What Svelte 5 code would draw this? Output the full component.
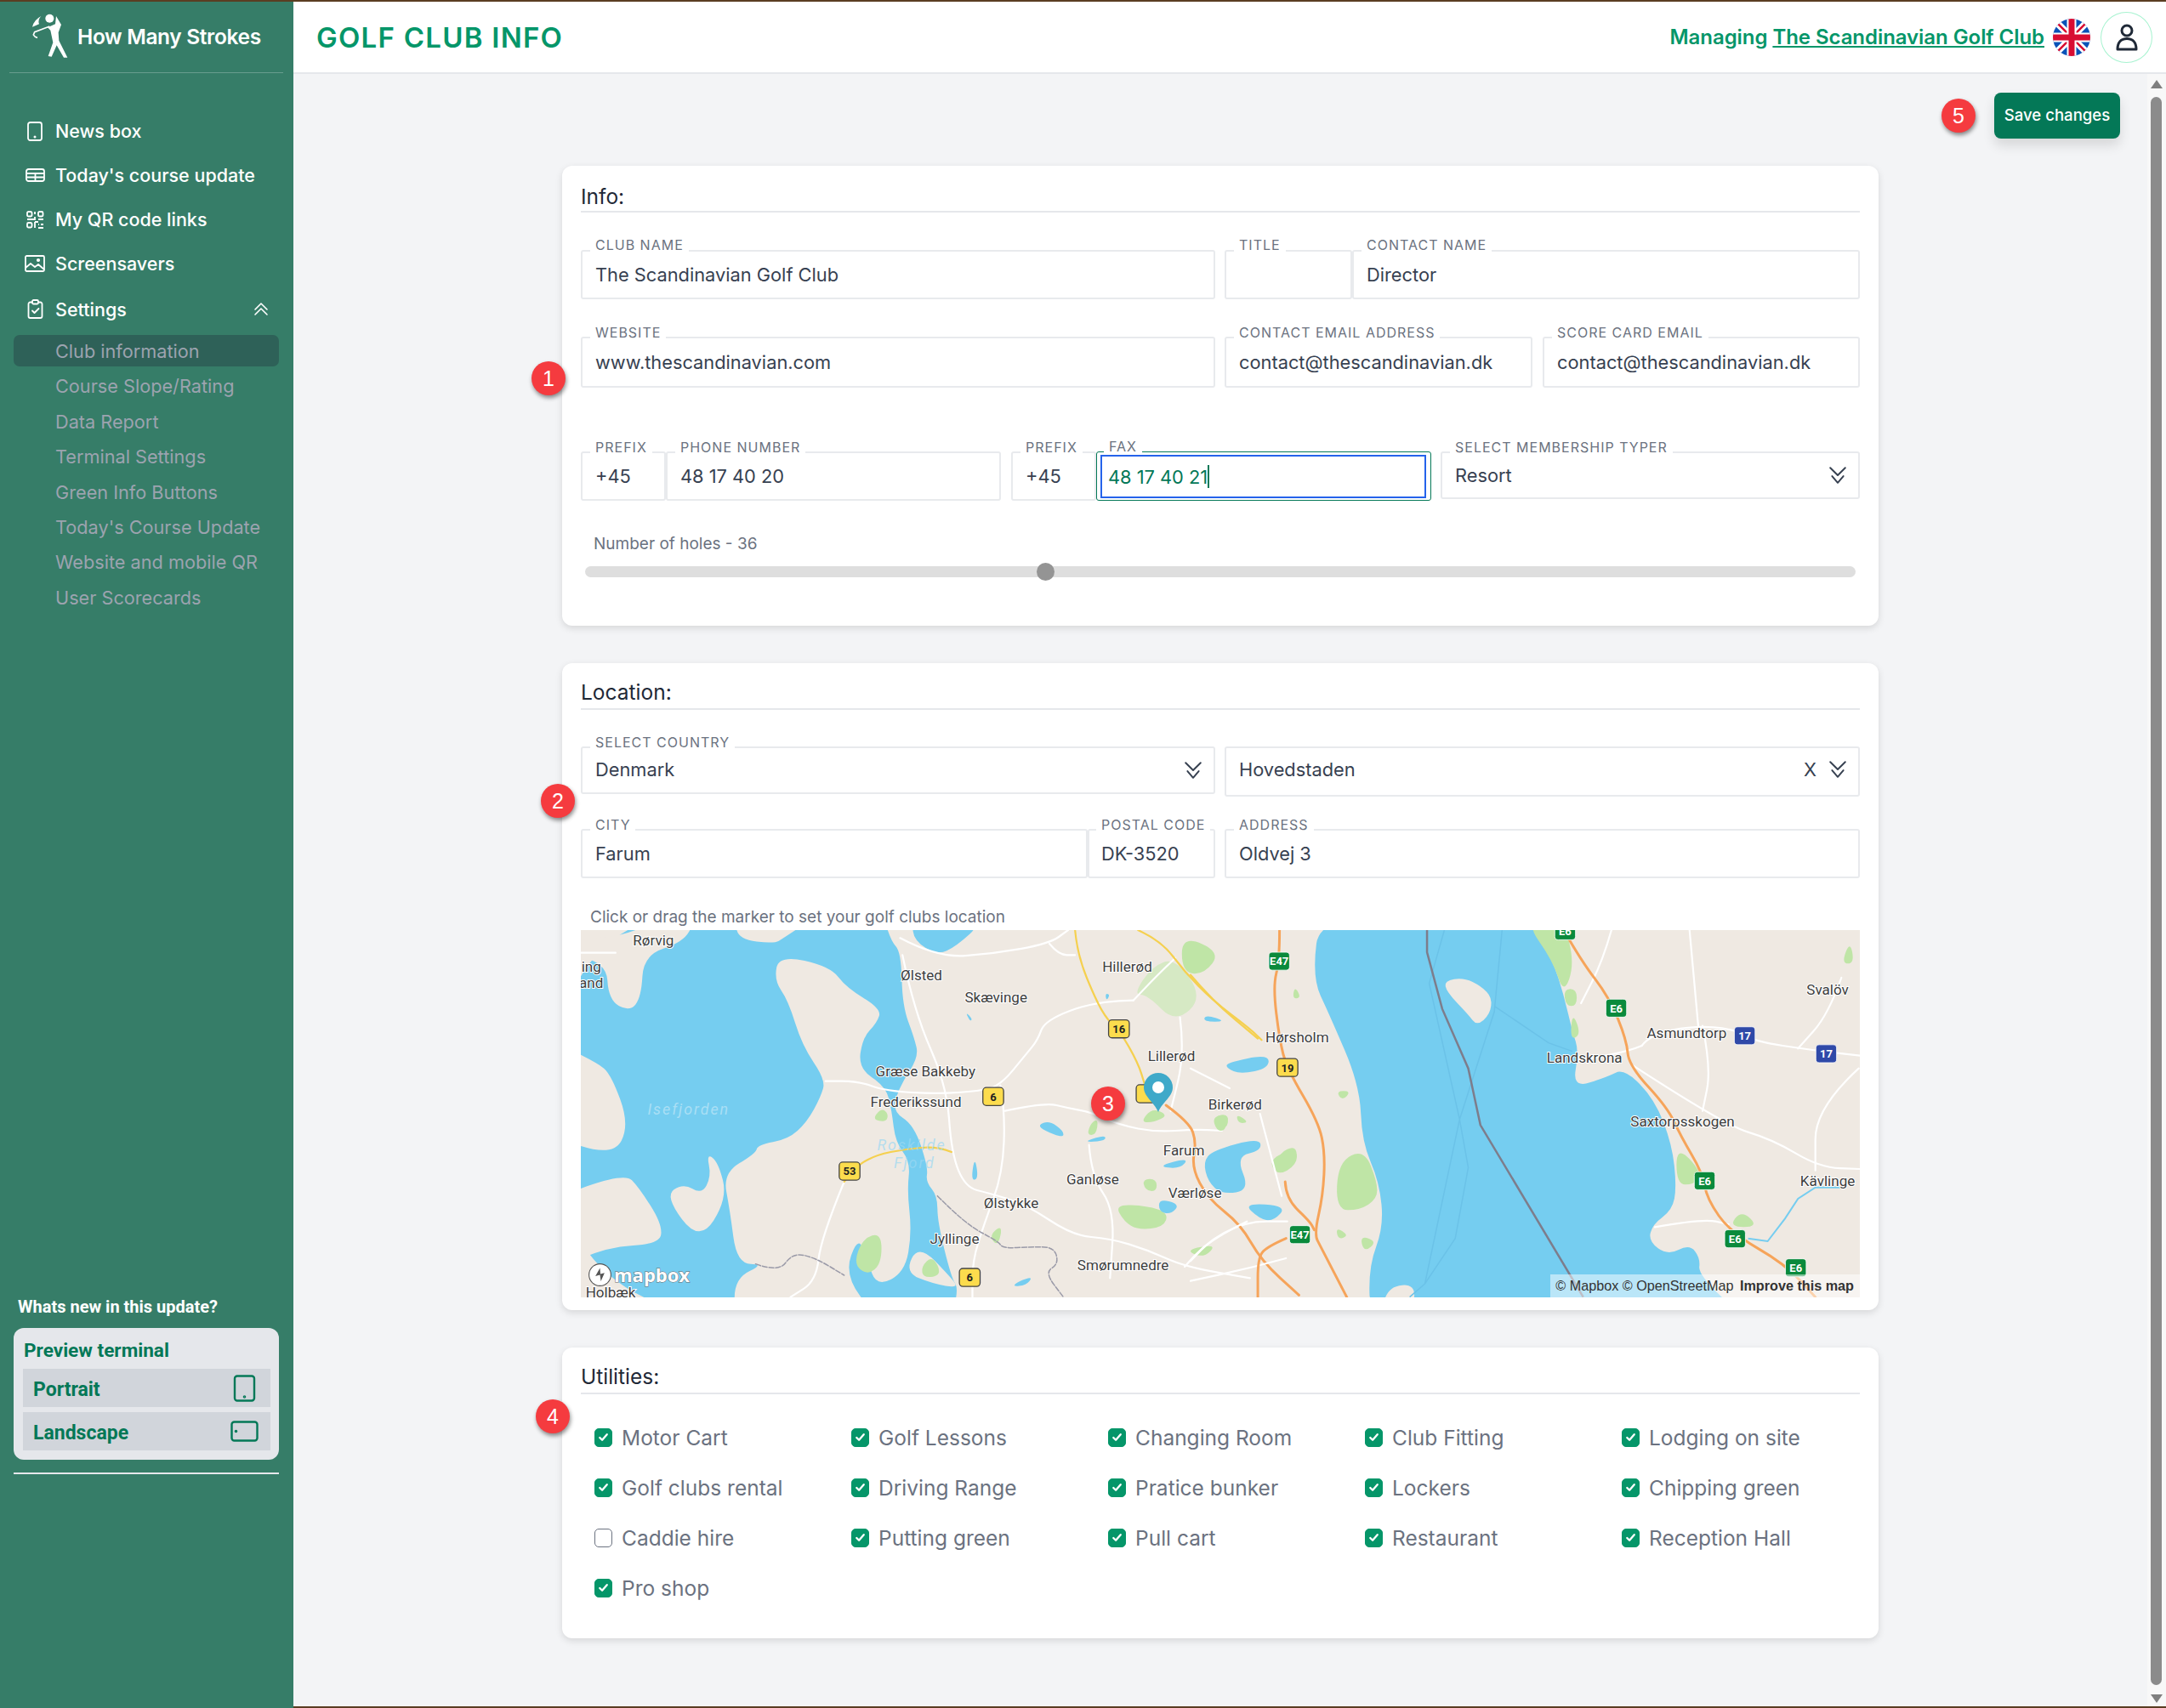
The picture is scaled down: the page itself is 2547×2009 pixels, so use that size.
<script>
	const mainNav = ['News box', "Today's course update", 'My QR code links', 'Screensavers'];
	const subNav = [
		'Club information',
		'Course Slope/Rating',
		'Data Report',
		'Terminal Settings',
		'Green Info Buttons',
		"Today's Course Update",
		'Website and mobile QR',
		'User Scorecards'
	];

	const holes = 36;
	const holesPercent = 36.2;

	let utilities = $state([
		{ name: 'Motor Cart', on: true },
		{ name: 'Golf Lessons', on: true },
		{ name: 'Changing Room', on: true },
		{ name: 'Club Fitting', on: true },
		{ name: 'Lodging on site', on: true },
		{ name: 'Golf clubs rental', on: true },
		{ name: 'Driving Range', on: true },
		{ name: 'Pratice bunker', on: true },
		{ name: 'Lockers', on: true },
		{ name: 'Chipping green', on: true },
		{ name: 'Caddie hire', on: false },
		{ name: 'Putting green', on: true },
		{ name: 'Pull cart', on: true },
		{ name: 'Restaurant', on: true },
		{ name: 'Reception Hall', on: true },
		{ name: 'Pro shop', on: true }
	]);

	// numbered callouts, centre point on the page
	const callouts = [
		{ n: 1, x: 645, y: 445 },
		{ n: 2, x: 656, y: 942 },
		{ n: 3, x: 1303, y: 1298 },
		{ n: 4, x: 650, y: 1666 },
		{ n: 5, x: 2303, y: 136 }
	];

	// map labels in reference units, scaled by the group around them
	const places = [
		['Rørvig', 473, 681],
		['ing', 428, 700],
		['and', 428, 712],
		['Ølsted', 667, 706],
		['Skævinge', 721, 722],
		['Hillerød', 816, 700],
		['Hørsholm', 939, 751],
		['Græse Bakkeby', 670, 776],
		['Lillerød', 848, 765],
		['Frederikssund', 663, 798],
		['Birkerød', 894, 800],
		['Farum', 857, 833],
		['Ganløse', 791, 854],
		['Værløse', 865, 864],
		['Ølstykke', 732, 871],
		['Jyllinge', 691, 897],
		['Smørumnedre', 813, 916],
		['Holbæk', 442, 936],
		['Svalöv', 1323, 717],
		['Asmundtorp', 1221, 748],
		['Landskrona', 1147, 766],
		['Saxtorpsskogen', 1218, 812],
		['Kävlinge', 1323, 855]
	];

	const shields = [
		['E47', 926, 696, 'g'],
		['16', 810, 745, 'y'],
		['19', 932, 773, 'y'],
		['6', 719, 794, 'y'],
		['', 830, 792, 'y'],
		['53', 615, 848, 'y'],
		['E47', 941, 894, 'g'],
		['6', 702, 925, 'y'],
		['E6', 1133, 674, 'g'],
		['E6', 1170, 730, 'g'],
		['17', 1263, 750, 'b'],
		['17', 1322, 763, 'b'],
		['E6', 1234, 855, 'g'],
		['E6', 1256, 897, 'g'],
		['E6', 1300, 918, 'g']
	];

	// rounds off the hand traced outlines: corners become curves through the edge midpoints
	function smooth(d) {
		const n = d.match(/-?\d+(\.\d+)?/g).map(Number);
		const pts = [];
		for (let i = 0; i < n.length; i += 2) pts.push([n[i], n[i + 1]]);
		const mid = (a, b) => `${(a[0] + b[0]) / 2} ${(a[1] + b[1]) / 2}`;
		if (d.trim().endsWith('Z')) {
			let out = `M${mid(pts[0], pts[1])}`;
			for (let i = 1; i <= pts.length; i++) {
				const p = pts[i % pts.length];
				const q = pts[(i + 1) % pts.length];
				out += `Q${p[0]} ${p[1]} ${mid(p, q)}`;
			}
			return out + 'Z';
		}
		let out = `M${pts[0][0]} ${pts[0][1]}`;
		for (let i = 1; i < pts.length - 1; i++) {
			out += `Q${pts[i][0]} ${pts[i][1]} ${mid(pts[i], pts[i + 1])}`;
		}
		const last = pts[pts.length - 1];
		return out + `L${last[0]} ${last[1]}`;
	}

	// west half of the map, in 0.5485 x 0.3333 units
	const westWater = 'M-60 -60L650 -60L670 50L692 90L695 280L720 390L730 460L690 560L672 650L720 700L750 850L745 900L770 950L770 1040L800 1240L815 1275L800 1380L-60 1380Z';
	const westLand = [
		'M-60 60L40 40L100 28L170 -20L250 -20L225 55L140 100L135 250L110 300L65 260L60 120L-60 95Z',
		'M335 -20L495 -20L440 40L420 60L345 45Z',
		'M430 100L540 140L575 215L650 290L640 340L610 390L600 500L660 565L672 650L680 760L712 830L705 930L715 1080L700 1220L640 1270L620 1180L600 1090L570 1230L640 1380L335 1380L335 1240L400 1190L340 1190L325 1000L310 870L380 800L385 770L450 750L490 690L520 600L530 540L480 420L450 260L420 190Z',
		'M-60 400L40 480L70 520L110 700L75 810L-60 740Z',
		'M-60 960L100 870L130 920L180 1050L175 1120L60 1130L-60 1220Z',
		'M275 800L300 830L320 960L260 1115L185 950L225 905L265 945L285 880Z',
		'M700 1220L730 1120L800 1240L815 1275L760 1260Z'
	];
	const westLakes = [
		'M715 -20L870 -20L810 70L770 100L720 50Z',
		'M1390 480L1480 450L1480 500L1420 520L1390 500Z',
		'M985 700L1010 685L1040 720L1040 745L1000 720Z',
		'M1340 830L1360 790L1460 745L1465 790L1410 810L1440 930L1380 945L1350 900Z',
		'M1240 845L1310 815L1290 855Z',
		'M1245 960L1290 980L1270 1015L1245 1005Z',
		'M1090 755L1130 735L1130 755L1095 760Z',
		'M830 300L845 325L840 335Z',
		'M1425 975L1520 985L1490 1040L1460 1030Z',
		'M850 810L858 890L842 895Z',
		'M945 1250L975 1235L960 1265L930 1270Z',
		'M1345 310L1390 335L1340 335Z',
		'M1130 235L1140 240L1132 262Z'
	];
	const westForest = 'M1230 140L1280 110L1340 250L1280 340L1220 240L1190 240Z';
	const westGreen = [
		'M1150 980L1220 985L1265 1010L1255 1060L1200 1070L1170 1040Z',
		'M1205 690L1230 640L1265 665L1235 690Z',
		'M1090 735L1100 690L1115 680L1110 735Z',
		'M1360 670L1395 660L1390 720Z',
		'M1210 890L1240 890L1240 935L1215 930Z',
		'M630 680L650 640L665 660L660 690Z',
		'M590 1190L610 1100L650 1080L650 1190L620 1230Z',
		'M735 1200L760 1160L780 1230L740 1240Z',
		'M880 1090L910 1050L900 1130Z',
		'M1500 800L1540 770L1540 840L1510 850Z',
		'M1300 1140L1370 1120L1340 1170Z'
	];
	const westWhite = [
		'M690 40L770 110L890 95L1010 60L1050 12',
		'M1010 60L1030 100L1065 100',
		'M1190 260L1110 262L1000 330L985 400L960 450L905 560L860 580L770 590L660 580L600 545L530 545',
		'M905 560L915 650L910 870L870 1050L845 1180L845 1307',
		'M915 650L1000 620L1050 640L1100 655L1160 700L1240 725L1320 715L1380 720',
		'M695 100L720 300L790 560L800 800L830 920L880 940L960 980L1060 1090L1140 1100L1220 1140L1300 1200L1440 1240',
		'M570 900L520 1100L510 1250L455 1307',
		'M1190 260L1230 190L1280 110',
		'M1095 770L1100 880L1150 1000L1140 1240',
		'M1290 320L1300 450L1270 650',
		'M5 92L80 92',
		'M1300 1200L1340 1120L1430 1040L1520 1040'
	];
	const westYellow = [
		'M1065 12L1070 100L1110 260L1135 330L1160 365L1200 480L1215 560',
		'M1200 12L1250 50L1300 160L1360 260L1440 360L1465 400',
		'M800 795L770 775L700 785L640 805L600 840L570 900'
	];
	const westOrange = 'M1260 630L1310 690L1325 760L1315 850L1350 960L1420 1050L1465 1180L1545 1300';
	const westBorder = [
		'M770 950L830 1050L900 1110L910 1135L970 1130L1020 1130L1030 1190L1000 1220L1040 1307',
		'M380 1190L430 1220L460 1150L510 1170L570 1230'
	];

	// east half of the map, in 0.5102 x 0.3333 units
	const sound = 'M300 -60L770 -60L835 120L860 240L880 370L895 440L880 570L960 530L1000 500L1070 610L1110 770L1120 920L1110 1000L1065 1050L1055 1110L1100 1160L1150 1120L1175 1170L1170 1230L1290 1400L415 1400L410 1200L445 1060L435 900L395 760L390 560L320 310L280 180Z';
	const eastLand = [
		'M585 190L630 180L670 210L695 250L690 310L660 350L640 310L590 230Z',
		'M450 1270L525 1260L500 1400L440 1400Z'
	];
	const eastGreen = [
		'M335 1000L340 830L400 785L430 900L430 960L390 1000Z',
		'M770 -20L860 -20L885 130L860 240L835 120Z',
		'M860 220L890 220L890 280L865 280Z',
		'M1120 770L1180 870L1160 910L1120 910Z',
		'M180 820L245 780L245 840L200 880Z',
		'M-20 30L70 90L30 170L-20 160Z',
		'M335 580L370 580L350 615Z',
		'M50 670L90 660L80 720L60 720Z',
		'M1520 50L1530 130L1500 130Z',
		'M1270 1000L1310 1060L1240 1060Z',
		'M390 1090L430 1110L400 1150Z',
		'M105 660L135 690L110 695Z',
		'M335 1060L365 1090L340 1105Z',
		'M880 300L900 380L875 400Z',
		'M240 210L255 250L235 255Z'
	];
	const eastWhite = [
		'M1040 420L1010 440L900 470',
		'M1040 420L1060 380L1160 350L1250 360L1300 405L1430 435L1543 455',
		'M970 12L950 120L900 270',
		'M1170 350L1150 12',
		'M1180 350L1200 500L1180 650',
		'M1020 490L1230 700L1340 750L1450 850L1543 855',
		'M0 500L90 570',
		'M160 660L210 950',
		'M1070 1060L1180 1030L1240 1050',
		'M130 1040L50 1100L0 1180',
		'M220 1170L150 1200L0 1250',
		'M1540 500L1440 640L1440 860',
		'M1500 180L1470 310L1400 430'
	];
	const eastOrange = [
		'M205 12L205 120L190 210L205 400L222 500L295 690L310 800L305 950L285 1085L300 1130L360 1307',
		'M218 900L220 960L275 1040L285 1070',
		'M220 1100L175 1130L155 1170L155 1307',
		'M860 12L900 120L965 250L1005 400L1010 490L1100 640L1130 740L1180 870L1190 960L1245 1080L1370 1190L1440 1307'
	];
</script>

{#snippet chevrons()}
	<svg class="chevrons" viewBox="0 0 20 20" fill="none" stroke="currentColor" stroke-width="1.8" stroke-linecap="round" stroke-linejoin="round">
		<path d="M2 2l8 8 8-8" />
		<path d="M4 11l6 7 6-7" />
	</svg>
{/snippet}

<div class="page">
	<aside class="sidebar">
		<div class="brand">
			<svg class="golfer" viewBox="0 0 270 225" fill="#fff">
				<circle cx="115" cy="50" r="15" />
				<path d="M108 82L135 70L138 42L156 72L146 100L148 128L178 188L165 188L140 145L122 185L110 183L127 135L118 92Z" />
				<path d="M115 78L62 98L58 108Q62 116 72 118" fill="none" stroke="#fff" stroke-width="5" />
				<path d="M85 42Q60 55 54 80L78 70Q72 55 85 42Z" />
			</svg>
			<span>How Many Strokes</span>
		</div>

		<nav class="nav">
			{#each mainNav as item, i}
				<a class="nav-item" href="#top">
					<span class="nav-icon">
						{#if i === 0}
							<svg width="18" height="23" viewBox="0 0 18 23" fill="none" stroke="#fff" stroke-width="1.8">
								<rect x="1" y="1" width="16" height="21" rx="2.5" />
								<circle cx="9" cy="18" r=".6" fill="#fff" />
							</svg>
						{:else if i === 1}
							<svg width="23" height="16" viewBox="0 0 23 16" fill="none" stroke="#fff" stroke-width="1.8">
								<rect x="1" y="1" width="21" height="14" rx="2.5" />
								<path d="M1 6h21M1 10.5h21M11.5 6v9" />
							</svg>
						{:else if i === 2}
							<svg width="21" height="21" viewBox="0 0 21 21" fill="none" stroke="#fff" stroke-width="1.8">
								<rect x="1" y="1" width="5.5" height="5.5" rx="1.5" />
								<rect x="14" y="1" width="5.5" height="5.5" rx="1.5" />
								<rect x="1" y="14" width="5.5" height="5.5" rx="1.5" />
								<path d="M10 1v3M10 7v3H1M14 10h6M10 13h4M10 13v7M14 16h1M17 16h3M14 20h6" />
							</svg>
						{:else}
							<svg width="24" height="20" viewBox="0 0 24 20" fill="none" stroke="#fff" stroke-width="1.8" stroke-linejoin="round">
								<rect x="1" y="1" width="22" height="18" rx="1.5" />
								<path d="M1 15l6-5 5 4 4-3 7 6" />
								<circle cx="16" cy="6" r="1.2" fill="#fff" />
							</svg>
						{/if}
					</span>
					{item}
				</a>
			{/each}

			<a class="nav-item settings" href="#top">
				<span class="nav-icon">
					<svg width="19" height="23" viewBox="0 0 19 23" fill="none" stroke="#fff" stroke-width="1.8" stroke-linecap="round" stroke-linejoin="round">
						<path d="M6 3.5H3.5a2 2 0 0 0-2 2V20a2 2 0 0 0 2 2h12a2 2 0 0 0 2-2V5.5a2 2 0 0 0-2-2H13" />
						<rect x="6" y="1" width="7" height="4.5" rx="1.5" />
						<path d="M6 13.5l2.5 2.5 5-5" />
					</svg>
				</span>
				Settings
				<svg class="caret" viewBox="0 0 18 18" fill="none" stroke="#fff" stroke-width="1.6" stroke-linecap="round" stroke-linejoin="round">
					<path d="M2 10l7-7 7 7" />
					<path d="M2 16l7-7 7 7" />
				</svg>
			</a>

			<div class="subnav">
				{#each subNav as item, i}
					<a class="sub-item" class:active={i === 0} href="#top">{item}</a>
				{/each}
			</div>
		</nav>

		<div class="whatsnew">
			<p class="whatsnew-title">Whats new in this update?</p>
			<div class="preview">
				<p class="preview-title">Preview terminal</p>
				<button class="preview-btn">
					<span>Portrait</span>
					<svg class="portrait" width="27" height="32" viewBox="0 0 27 32" fill="none" stroke="#047857" stroke-width="2.4">
						<rect x="2" y="1.5" width="23" height="29" rx="3" />
						<circle cx="13.500" cy="26" r=".6" fill="#047857" />
					</svg>
				</button>
				<button class="preview-btn">
					<span>Landscape</span>
					<svg width="33" height="25" viewBox="0 0 33 25" fill="none" stroke="#047857" stroke-width="2.4">
						<rect x="1.500" y="1.500" width="30" height="22" rx="3" />
						<circle cx="6.500" cy="12.500" r=".6" fill="#047857" />
					</svg>
				</button>
			</div>
			<div class="whatsnew-rule"></div>
		</div>
	</aside>

	<div class="column">
		<header class="topbar">
			<h1>GOLF CLUB INFO</h1>
			<div class="topbar-right">
				<span class="managing">Managing <a href="#top">The Scandinavian Golf Club</a></span>
				<svg class="flag" viewBox="0 0 44 44">
					<defs>
						<clipPath id="flag-clip"><circle cx="22" cy="22" r="22" /></clipPath>
					</defs>
					<g clip-path="url(#flag-clip)">
						<rect width="44" height="44" fill="#0a52b8" />
						<path d="M0 0L44 44M44 0L0 44" stroke="#fff" stroke-width="8" />
						<path d="M0 0L44 44M44 0L0 44" stroke="#d80d33" stroke-width="2.500" />
						<path d="M22 0V44M0 22H44" stroke="#fff" stroke-width="11" />
						<path d="M22 0V44M0 22H44" stroke="#d80d33" stroke-width="7" />
					</g>
				</svg>
				<div class="avatar">
					<svg width="26" height="32" viewBox="0 0 26 32" fill="none" stroke="#1f2937" stroke-width="3">
						<circle cx="13" cy="8" r="6" />
						<path d="M2 30C2 22 6 17.500 13 17.500S24 22 24 30Z" stroke-linejoin="round" />
					</svg>
				</div>
			</div>
		</header>

		<div class="body">
			<main class="content">
				<div class="save-row">
					<button class="save">Save changes</button>
				</div>

				<section class="card info">
					<h2>Info:</h2>
					<div class="row split first">
						<div class="field h58"><label>Club name</label><div class="value">The Scandinavian Golf Club</div></div>
						<div class="group">
							<div class="field h58 title-field"><label>Title</label><div class="value"></div></div>
							<div class="field h58 grow"><label>Contact name</label><div class="value">Director</div></div>
						</div>
					</div>
					<div class="row split second">
						<div class="field h60"><label>Website</label><div class="value">www.thescandinavian.com</div></div>
						<div class="group gap">
							<div class="field h60 email"><label>Contact email address</label><div class="value">contact@thescandinavian.dk</div></div>
							<div class="field h60 grow"><label>Score card email</label><div class="value">contact@thescandinavian.dk</div></div>
						</div>
					</div>
					<div class="row contact">
						<div class="field h58 prefix"><label>Prefix</label><div class="value">+45</div></div>
						<div class="field h58 phone"><label>Phone number</label><div class="value">48 17 40 20</div></div>
						<div class="field h58 prefix second-prefix"><label>Prefix</label><div class="value">+45</div></div>
						<div class="field h58 phone focused"><label>Fax</label><div class="value">48 17 40 21<span class="caret-line"></span></div></div>
						<div class="field select membership"><label>Select membership typer</label><div class="value">Resort</div>{@render chevrons()}</div>
					</div>
					<p class="holes-label">Number of holes - {holes}</p>
					<div class="slider">
						<span class="thumb" style="left: {holesPercent}%"></span>
					</div>
				</section>

				<section class="card location">
					<h2>Location:</h2>
					<div class="row split country">
						<div class="field select h55"><label>Select country</label><div class="value">Denmark</div>{@render chevrons()}</div>
						<div class="field select region"><div class="value">Hovedstaden</div><span class="clear">X</span>{@render chevrons()}</div>
					</div>
					<div class="row split city">
						<div class="group">
							<div class="field h58 grow"><label>City</label><div class="value">Farum</div></div>
							<div class="field h58 postal"><label>Postal code</label><div class="value">DK-3520</div></div>
						</div>
						<div class="field h58"><label>Address</label><div class="value">Oldvej 3</div></div>
					</div>
					<p class="hint">Click or drag the marker to set your golf clubs location</p>
					<div class="map">
						<svg class="map-svg" viewBox="683 1094 1504 432" preserveAspectRatio="none">
							<rect x="683" y="1094" width="1504" height="432" fill="#efe9e2" />

							<g transform="translate(680 1090) scale(0.5485 0.33333)">
								<path fill="#75cdf0" d={smooth(westWater)} />
								{#each westLand as d}
									<path d={smooth(d)} fill="#efe9e2" />
								{/each}
								<path d={smooth(westForest)} fill="#d6e9c4" />
								{#each westGreen as d}
									<path d={smooth(d)} fill="#bfe5a6" />
								{/each}
								{#each westLakes as d}
									<path d={smooth(d)} fill="#75cdf0" />
								{/each}
								<g class="roads white">
									{#each westWhite as d}
										<path d={smooth(d)} />
									{/each}
								</g>
								<g class="roads yellow">
									{#each westYellow as d}
										<path d={smooth(d)} />
									{/each}
								</g>
								<g class="roads orange">
									<path d={smooth(westOrange)} />
								</g>
								<g class="roads border-dash">
									{#each westBorder as d}
										<path d={smooth(d)} />
									{/each}
								</g>
							</g>

							<g transform="translate(1400 1090) scale(0.5102 0.33333)">
								<path fill="#75cdf0" d={smooth(sound)} />
								{#each eastLand as d}
									<path d={smooth(d)} fill="#efe9e2" />
								{/each}
								<path fill="none" stroke="#6bc2e8" stroke-width="1.500" vector-effect="non-scaling-stroke" d="M585 12L550 200L620 680L640 850L610 1100L540 1260L505 1307M718 12L700 300L620 680L540 1260M700 280L825 410L880 440" />
								<path fill="none" stroke="#7d7d8c" stroke-width="2.500" vector-effect="non-scaling-stroke" d="M545 12L545 90L580 290L640 500L668 700L905 1307" />
								{#each eastGreen as d}
									<path d={smooth(d)} fill="#bfe5a6" />
								{/each}
								<path fill="none" stroke="#75cdf0" stroke-width="2" vector-effect="non-scaling-stroke" d="M1285 1100L1330 1110L1370 1030L1400 960L1440 920L1500 920" />
								<g class="roads white">
									{#each eastWhite as d}
										<path d={smooth(d)} />
									{/each}
								</g>
								<g class="roads orange">
									{#each eastOrange as d}
										<path d={smooth(d)} />
									{/each}
								</g>
								<g class="roads yellow">
									<path d={smooth('M0 170L50 260L155 395')} />
								</g>
							</g>

							<g transform="scale(1.6244)">
								<text class="sea" x="498.500" y="807">Isefjorden</text>
								<text class="sea fjord" x="660" y="833">Roskilde</text>
								<text class="sea fjord" x="662" y="846">Fjord</text>
								{#each shields as [label, x, y, kind]}
									<rect class="shield {kind}" x={x - 7.500} y={y - 6.500} width="15" height="13" rx="2.500" />
									<text class="shield-text {kind}" {x} y={y + 3}>{label}</text>
								{/each}
								{#each places as [name, x, y]}
									<text class="place" {x} y={y + 3.500}>{name}</text>
								{/each}
							</g>

							<path d="M1362 1308C1357 1296 1345 1290 1345 1279A17 17 0 0 1 1379 1279C1379 1290 1367 1296 1362 1308Z" fill="#3fa9c9" />
							<circle cx="1362" cy="1279" r="7" fill="#fff" />
						</svg>

						<div class="mapbox-logo">
							<svg width="29" height="29" viewBox="0 0 27 27">
								<circle cx="13.500" cy="13.500" r="11.500" fill="#fff" stroke="#555" stroke-width="2" />
								<path d="M13.500 6l-5 9 5 -1.500 1 7 4 -9-4.500 1z" fill="#555" />
							</svg>
							<span>mapbox</span>
						</div>
						<div class="attribution">© Mapbox © OpenStreetMap <b>Improve this map</b></div>
					</div>
				</section>

				<section class="card utilities">
					<h2>Utilities:</h2>
					<div class="util-grid">
						{#each utilities as item}
							<label class="util">
								<input type="checkbox" bind:checked={item.on} />
								<span>{item.name}</span>
							</label>
						{/each}
					</div>
				</section>
			</main>

			<div class="scrollbar">
				<span class="arrow up"></span>
				<span class="scroll-thumb"></span>
				<span class="arrow down"></span>
			</div>
		</div>
	</div>

	{#each callouts as c}
		<span class="callout" style="left: {c.x - 20}px; top: {c.y - 22}px">{c.n}</span>
	{/each}
</div>

<style>
	:global(body) {
		margin: 0;
		font-family: Inter, "Noto Sans", sans-serif;
		background: #f3f4f6;
	}

	.page {
		position: relative;
		display: flex;
		width: 2547px;
		height: 2009px;
		box-sizing: border-box;
		border-top: 2px solid #5a3d22;
		overflow: hidden;
	}

	a {
		color: inherit;
		text-decoration: none;
	}

	/* sidebar */
	.sidebar {
		display: flex;
		flex-direction: column;
		flex: 0 0 345px;
		background: #367d68;
		color: #fff;
	}

	.brand {
		position: relative;
		height: 83px;
		margin: 0 12px 0 11px;
		border-bottom: 1px solid rgba(255, 255, 255, 0.25);
		box-sizing: content-box;
	}

	.golfer {
		position: absolute;
		left: 9px;
		top: 3px;
		width: 90px;
		height: 75px;
	}

	.brand span {
		position: absolute;
		left: 80px;
		top: 26px;
		font-size: 24.500px;
		line-height: 30px;
		font-weight: 600;
		letter-spacing: -0.350px;
		white-space: nowrap;
	}

	.nav {
		display: flex;
		flex-direction: column;
		margin-top: 42px;
	}

	.nav-item {
		display: flex;
		align-items: center;
		height: 52px;
		padding-left: 29px;
		font-size: 21.500px;
		font-weight: 500;
	}

	.nav-icon {
		display: flex;
		align-items: center;
		justify-content: center;
		width: 24px;
		margin-right: 12px;
	}

	.settings {
		height: 57px;
		padding-bottom: 2px;
		box-sizing: border-box;
		position: relative;
	}

	.caret {
		position: absolute;
		left: 298px;
		top: 18px;
		width: 18px;
		height: 18px;
	}

	.subnav {
		display: flex;
		flex-direction: column;
		gap: 4.400px;
		margin: 1px 17px 0 16px;
	}

	.sub-item {
		height: 37px;
		line-height: 39px;
		padding-left: 49px;
		border-radius: 7px;
		font-size: 21.700px;
		color: #9ca3af;
	}

	.sub-item.active {
		background: #2e6158;
	}

	.whatsnew {
		margin-top: auto;
		padding: 0 17px 275px 16px;
	}

	.whatsnew-title {
		margin: 0 0 12px 5px;
		font-family: Roboto, sans-serif;
		font-size: 20px;
		line-height: 26px;
		font-weight: 700;
	}

	.preview {
		padding: 10px 10px 11px 11px;
		border-radius: 12px;
		background: #e5e7eb;
		color: #047857;
		font-family: Roboto, sans-serif;
		font-weight: 700;
	}

	.preview-title {
		margin: 0 0 7px 1px;
		padding-top: 1px;
		height: 30px;
		font-size: 22.600px;
		line-height: 31px;
	}

	.preview-btn {
		display: flex;
		align-items: center;
		justify-content: space-between;
		width: 100%;
		height: 45px;
		padding: 0 14px 0 12px;
		border: 0;
		background: #d1d5db;
		color: inherit;
		font: inherit;
		font-size: 23px;
	}

	.preview-btn span {
		padding-top: 3px;
	}

	.preview-btn + .preview-btn {
		margin-top: 6px;
	}

	.portrait {
		margin-right: 3px;
	}

	.whatsnew-rule {
		margin-top: 15px;
		height: 2px;
		background: #e5e7eb;
	}

	/* top bar */
	.column {
		display: flex;
		flex-direction: column;
		flex: 1;
		min-width: 0;
	}

	.topbar {
		display: flex;
		align-items: center;
		justify-content: space-between;
		flex: 0 0 85px;
		box-sizing: border-box;
		padding: 0 16px 0 27px;
		background: #fff;
		border-bottom: 2px solid #e5e7eb;
	}

	h1 {
		margin: 0;
		font-size: 33px;
		font-weight: 600;
		letter-spacing: 1.250px;
		color: #059669;
	}

	.topbar-right {
		display: flex;
		align-items: center;
	}

	.managing {
		font-size: 24px;
		font-weight: 600;
		color: #059669;
		letter-spacing: -0.060px;
	}

	.managing a {
		text-decoration: underline;
	}

	.flag {
		width: 44px;
		height: 44px;
		margin: 0 12px 0 10px;
	}

	.avatar {
		display: flex;
		align-items: center;
		justify-content: center;
		width: 61px;
		height: 60px;
		box-sizing: border-box;
		border: 1px solid #a7f3d0;
		border-radius: 50%;
		background: #fff;
	}

	/* page body */
	.body {
		display: flex;
		flex: 1;
		min-height: 0;
		border-bottom: 2px solid #5a3d22;
	}

	.content {
		flex: 1;
		min-width: 0;
		background: #f3f4f6;
	}

	.save-row {
		display: flex;
		justify-content: flex-end;
		padding: 22px 32px 0 0;
	}

	.save {
		width: 148px;
		height: 54px;
		padding: 0 0 3px;
		border: 0;
		border-radius: 8px;
		background: #047857;
		color: #fff;
		font-family: inherit;
		font-size: 18.600px;
		font-weight: 500;
		box-shadow: 0 8px 14px rgba(0, 0, 0, 0.12);
	}

	.scrollbar {
		position: relative;
		flex: 0 0 22px;
		background: #f8f8f8;
	}

	.arrow {
		position: absolute;
		left: 4px;
		width: 0;
		height: 0;
		border-left: 7px solid transparent;
		border-right: 7px solid transparent;
	}

	.arrow.up {
		top: 7px;
		border-bottom: 10px solid #7f7f7f;
	}

	.arrow.down {
		bottom: 4px;
		border-top: 10px solid #7f7f7f;
	}

	.scroll-thumb {
		position: absolute;
		left: 4px;
		right: 5px;
		top: 27px;
		bottom: 25px;
		border-radius: 8px;
		background: #8b8b8b;
	}

	/* cards */
	.card {
		width: 1548px;
		box-sizing: border-box;
		margin: 0 0 44px 316px;
		padding: 0 22px;
		border-radius: 12px;
		background: #fff;
		box-shadow: 0 3px 8px rgba(0, 0, 0, 0.12);
	}

	.info {
		margin-top: 32px;
		height: 541px;
	}

	.location {
		height: 761px;
	}

	.utilities {
		height: 342px;
	}

	h2 {
		margin: 0;
		padding-top: 16px;
		box-sizing: border-box;
		height: 55px;
		font-size: 24.500px;
		line-height: 36px;
		font-weight: 400;
		color: #1f2937;
		border-bottom: 2px solid #e5e7eb;
	}

	.info h2 {
		padding-top: 18px;
	}

	.row {
		display: flex;
		align-items: flex-start;
	}

	.split {
		display: grid;
		grid-template-columns: 746px 1fr;
		column-gap: 11px;
		align-items: start;
	}

	.first {
		margin-top: 44px;
	}

	.second {
		margin-top: 44px;
	}

	.contact {
		margin-top: 75px;
	}

	.group {
		display: flex;
	}

	.group.gap {
		gap: 12px;
	}

	.country {
		margin-top: 43px;
		height: 97px;
	}

	.grow {
		flex: 1;
	}

	.field {
		position: relative;
		box-sizing: border-box;
		border: 2px solid #e8eaed;
		border-radius: 3px;
		background: #fff;
		color: #374151;
	}

	.h55 {
		height: 55px;
	}

	.h58 {
		height: 58px;
	}

	.h60 {
		height: 60px;
	}

	.field label {
		position: absolute;
		left: 9px;
		top: -17px;
		padding: 0 6px 0 6px;
		background: #fff;
		font-size: 16px;
		line-height: 20px;
		letter-spacing: 1px;
		color: #6b7280;
		text-transform: uppercase;
		white-space: nowrap;
	}

	.first .field label {
		top: -18px;
	}

	.value {
		display: flex;
		align-items: center;
		height: 100%;
		padding-left: 15px;
		font-size: 21.800px;
		white-space: nowrap;
	}

	.title-field {
		width: 150px;
	}

	.email {
		width: 362px;
	}

	.prefix {
		width: 100px;
	}

	.phone {
		width: 394px;
	}

	.second-prefix {
		margin-left: 12px;
	}

	.focused {
		border: 1.500px solid #047857;
		color: #047857;
	}

	.focused .value {
		margin: 3px 5px 2px 4px;
		height: calc(100% - 5px);
		padding-left: 9px;
		outline: 2.500px solid #2563eb;
		outline-offset: -2px;
	}

	.focused label {
		top: -17px;
		left: 8px;
	}

	.caret-line {
		display: inline-block;
		width: 2px;
		height: 27px;
		background: #047857;
	}

	.select {
		display: flex;
		align-items: center;
		justify-content: space-between;
		padding-right: 13px;
		height: 56px;
	}

	.membership {
		flex: 1;
		margin-left: 11px;
	}

	.select .value {
		flex: 1;
	}

	.h55 .value {
		padding-bottom: 3px;
		box-sizing: border-box;
	}

	.region {
		height: 59px;
		padding-bottom: 6px;
	}

	.clear {
		margin-right: 14px;
		font-size: 22px;
		color: #374151;
	}

	.chevrons {
		width: 22px;
		height: 22px;
		color: #374151;
	}

	.postal .value {
		padding-left: 14px;
	}

	.postal label {
		left: 8px;
	}

	.postal {
		width: 150px;
	}

	.holes-label {
		margin: 38px 0 0 15px;
		font-size: 19px;
		line-height: 26px;
		color: #6b7280;
	}

	.slider {
		position: relative;
		height: 13px;
		margin: 13px 5px 0;
		border-radius: 7px;
		background: #dedede;
	}

	.thumb {
		position: absolute;
		top: -4px;
		width: 21px;
		height: 21px;
		margin-left: -10px;
		border-radius: 50%;
		background: #949494;
	}

	.hint {
		margin: 31px 0 0 11px;
		height: 30px;
		font-size: 19px;
		line-height: 30px;
		color: #6b7280;
	}

	.map {
		position: relative;
		height: 432px;
		overflow: hidden;
	}

	.map-svg {
		display: block;
		width: 100%;
		height: 100%;
	}

	.roads {
		fill: none;
	}

	.roads path {
		vector-effect: non-scaling-stroke;
		stroke-linejoin: round;
		stroke-linecap: round;
	}

	.white path {
		stroke: #fff;
		stroke-width: 2.200;
	}

	.yellow path {
		stroke: #f5d04f;
		stroke-width: 2.200;
	}

	.orange path {
		stroke: #f6a45a;
		stroke-width: 3;
	}

	.border-dash path {
		stroke: #9a9aa8;
		stroke-width: 1.500;
		stroke-dasharray: 6 2;
	}

	.place {
		font-family: Roboto, sans-serif;
		font-size: 10.500px;
		fill: #3d3d3d;
		stroke: #fff;
		stroke-width: 1.200px;
		paint-order: stroke;
		text-anchor: middle;
	}

	.sea {
		font-family: Roboto, sans-serif;
		font-style: italic;
		font-size: 11px;
		letter-spacing: 1.200px;
		fill: #a9dff5;
		text-anchor: middle;
	}

	.fjord {
		fill: #9bd8f2;
		fill-opacity: 0.7;
	}

	.shield {
		stroke: #fff;
		stroke-width: 0.500px;
	}

	.shield.y {
		fill: #fcdc4d;
		stroke: #444;
		stroke-width: 0.800px;
	}

	.shield.g {
		fill: #0a8a3c;
	}

	.shield.b {
		fill: #2f49a8;
	}

	.shield-text {
		font-family: Roboto, sans-serif;
		font-size: 8px;
		font-weight: 700;
		fill: #fff;
		text-anchor: middle;
	}

	.shield-text.y {
		fill: #222;
	}

	.mapbox-logo {
		position: absolute;
		left: 8px;
		bottom: 12px;
		display: flex;
		align-items: center;
		gap: 2px;
		font-family: "Open Sans", sans-serif;
		font-size: 22px;
		font-weight: 700;
		line-height: 27px;
		color: #fff;
		-webkit-text-stroke: 1px #666;
		paint-order: stroke;
	}

	.attribution {
		position: absolute;
		right: 0;
		bottom: 0;
		width: 364px;
		box-sizing: border-box;
		height: 27px;
		padding-right: 7px;
		line-height: 27px;
		text-align: right;
		background: rgba(255, 255, 255, 0.5);
		font-family: "Liberation Sans", Arial, sans-serif;
		font-size: 16.200px;
		color: #333;
		white-space: nowrap;
	}

	.attribution b {
		margin-left: 3px;
	}

	.util-grid {
		display: grid;
		grid-template-columns: repeat(5, 302px);
		grid-auto-rows: 59px;
		margin: 21px 0 0 16px;
	}

	.util {
		display: flex;
		align-items: center;
		gap: 11px;
		font-size: 24.500px;
		color: #6b7280;
		white-space: nowrap;
	}

	.util input {
		appearance: none;
		flex: none;
		width: 21px;
		height: 22px;
		margin: 0;
		border: 1.500px solid #6b7280;
		border-radius: 5px;
		background: #fff center / 15px 15px no-repeat;
	}

	.util input:checked {
		border-color: #059669;
		background-color: #059669;
		background-image: url("data:image/svg+xml,%3Csvg xmlns='http://www.w3.org/2000/svg' viewBox='0 0 16 16' fill='none' stroke='white' stroke-width='2.5' stroke-linecap='round' stroke-linejoin='round'%3E%3Cpath d='M3.500 8.500l3 3 6-7'/%3E%3C/svg%3E");
	}

	/* numbered callouts */
	.callout {
		position: absolute;
		display: flex;
		align-items: center;
		justify-content: center;
		width: 40px;
		height: 40px;
		border-radius: 50%;
		background: #f53b3f;
		color: #fff;
		font-family: "Liberation Sans", Arial, sans-serif;
		font-size: 25px;
		box-shadow: 1px 3px 5px rgba(0, 0, 0, 0.45);
	}
</style>
